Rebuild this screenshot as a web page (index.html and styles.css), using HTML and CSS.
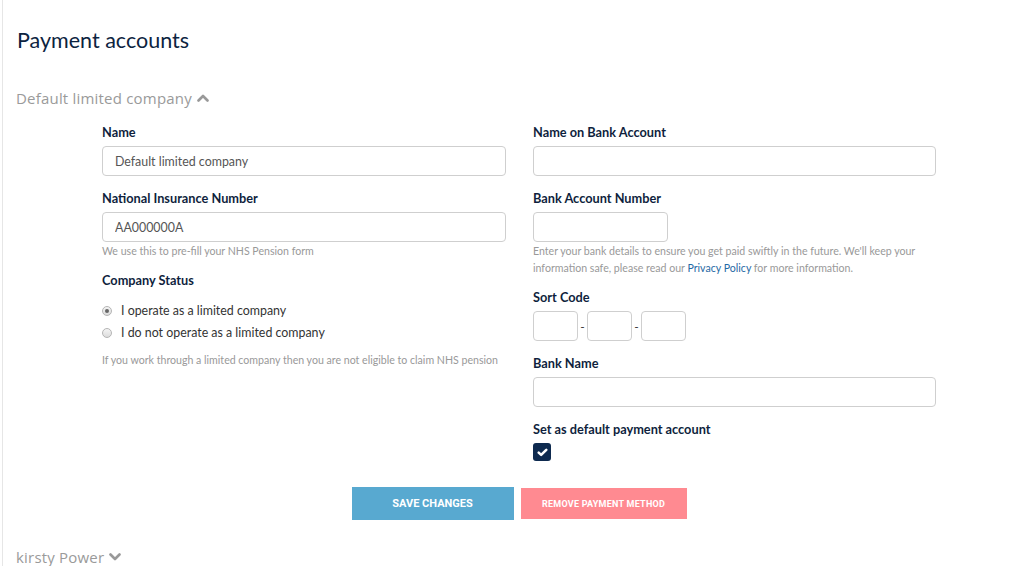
FILE: index.html
```html
<!DOCTYPE html>
<html lang="en">
<head>
<meta charset="utf-8">
<title>Payment accounts</title>
<link rel="stylesheet" href="styles.css">
</head>
<body>
<div class="page">
  <h1 class="title">Payment accounts</h1>

  <section class="account">
    <h2 class="acc-head">Default limited company
      <svg class="chev" viewBox="0 0 12 8" width="12" height="8"><path d="M1.5 6.5 L6 2 L10.5 6.5" fill="none" stroke="#999" stroke-width="2.6" stroke-linecap="round" stroke-linejoin="round"/></svg>
    </h2>

    <div class="form">
      <div class="col">
        <div class="group">
          <label class="lbl">Name</label>
          <input class="field" type="text" value="Default limited company">
        </div>
        <div class="group">
          <label class="lbl">National Insurance Number</label>
          <input class="field" type="text" value="AA000000A">
          <p class="help">We use this to pre-fill your NHS Pension form</p>
        </div>
        <div class="group">
          <label class="lbl">Company Status</label>
          <div class="radios">
            <label class="radio"><span class="dot checked"></span>I operate as a limited company</label>
            <label class="radio"><span class="dot"></span>I do not operate as a limited company</label>
          </div>
          <p class="help help-radio">If you work through a limited company then you are not eligible to claim NHS pension</p>
        </div>
      </div>

      <div class="col">
        <div class="group">
          <label class="lbl">Name on Bank Account</label>
          <input class="field" type="text">
        </div>
        <div class="group">
          <label class="lbl">Bank Account Number</label>
          <input class="field field-acc" type="text">
          <p class="help help-bank">Enter your bank details to ensure you get paid swiftly in the future. We'll keep your information safe, please read our <a class="link" href="#">Privacy Policy</a> for more information.</p>
        </div>
        <div class="group">
          <label class="lbl">Sort Code</label>
          <div class="sort">
            <input class="field field-sort" type="text"><span class="dash">-</span><input class="field field-sort" type="text"><span class="dash">-</span><input class="field field-sort" type="text">
          </div>
        </div>
        <div class="group">
          <label class="lbl">Bank Name</label>
          <input class="field" type="text">
        </div>
        <div class="group">
          <label class="lbl">Set as default payment account</label>
          <span class="check">
            <svg viewBox="0 0 12 10" width="11" height="9"><path d="M1.8 5.2 L4.5 7.7 L10.2 2" fill="none" stroke="#fff" stroke-width="2.8" stroke-linecap="round" stroke-linejoin="round"/></svg>
          </span>
        </div>
      </div>
    </div>

    <div class="actions">
      <button class="btn btn-save">SAVE CHANGES</button>
      <button class="btn btn-remove">REMOVE PAYMENT METHOD</button>
    </div>
  </section>

  <section class="account">
    <h2 class="acc-head acc-head-2">kirsty Power
      <svg class="chev" viewBox="0 0 12 8" width="12" height="8"><path d="M1.5 1.5 L6 6 L10.5 1.5" fill="none" stroke="#999" stroke-width="2.6" stroke-linecap="round" stroke-linejoin="round"/></svg>
    </h2>
  </section>
</div>
</body>
</html>
```

FILE: styles.css
```css
* { box-sizing: border-box; }
html, body { margin: 0; padding: 0; background: #fff; }
body { font-family: "Lato", "Liberation Sans", sans-serif; overflow: hidden; height: 566px; }

.page {
  margin-left: 2px;
  border-left: 1px solid #e6e6e6;
  min-height: 566px;
  padding-left: 14px;
}

.title {
  margin: 0;
  padding-top: 26px;
  font-family: "Lato", sans-serif;
  font-weight: 400;
  font-size: 21.5px;
  line-height: 28px;
  color: #0c2340;
}

.acc-head {
  margin: 0;
  padding-top: 34px;
  margin-left: -1px;
  font-family: "Open Sans", sans-serif;
  font-weight: 400;
  font-size: 15px;
  letter-spacing: 0.2px;
  line-height: 20px;
  color: #9a9a9a;
  display: flex;
  align-items: center;
  gap: 5px;
}
.acc-head-2 { padding-top: 27px; }
.chev { display: block; }

.form {
  margin-left: 85px;
  width: 834px;
  display: grid;
  grid-template-columns: 404px 403px;
  column-gap: 27px;
  padding-top: 16px;
}

.col { display: flex; flex-direction: column; }

.group { display: flex; flex-direction: column; align-items: flex-start; margin-bottom: 14px; }

.lbl {
  font-weight: 700;
  font-size: 12.75px;
  line-height: 16px;
  color: #0f1f3d;
  margin-bottom: 6px;
}

.field {
  width: 100%;
  height: 30px;
  border: 1px solid #cfcfcf;
  border-radius: 4px;
  padding: 0 12px;
  font-family: "Lato", sans-serif;
  font-size: 12.4px;
  color: #555;
  background: #fff;
  outline: none;
}
.field-acc { width: 135px; }
.field-sort { width: 45px; }

.help {
  margin: 1px 0 0;
  font-size: 10.6px;
  line-height: 17px;
  color: #999;
}
.group:has(.help) { margin-bottom: 12px; }
.help-radio { margin-top: 8px; }

.link { color: #1f6aa5; text-decoration: none; }

.radios { display: flex; flex-direction: column; margin-top: 6px; }
.radio {
  display: flex;
  align-items: center;
  font-size: 12.4px;
  line-height: 22px;
  color: #333;
}
.dot {
  width: 10px;
  height: 10px;
  border-radius: 50%;
  border: 1px solid #b5b5b5;
  background: linear-gradient(#f4f4f4, #dcdcdc);
  margin-left: 0;
  margin-right: 9px;
  position: relative;
}
.dot.checked::after {
  content: "";
  position: absolute;
  left: 2px; top: 2px;
  width: 4px; height: 4px;
  border-radius: 50%;
  background: #666;
}

.sort { display: flex; align-items: center; }
.dash { width: 9px; text-align: center; font-size: 12px; color: #333; }

.check {
  width: 18px;
  height: 18px;
  border-radius: 3px;
  background: #0e2a4f;
  display: flex;
  align-items: center;
  justify-content: center;
}

.actions {
  display: flex;
  justify-content: center;
  align-items: center;
  gap: 7px;
  margin-top: 12px;
  margin-left: 85px;
  width: 834px;
}
.btn {
  border: 0;
  color: #fff;
  font-family: "Roboto", sans-serif;
  font-weight: 700;
  cursor: pointer;
  padding: 0;
}
.btn-save { width: 162px; height: 33px; background: #58a9d0; font-size: 11px; }
.btn-remove { width: 166px; height: 31px; background: #ff8a91; font-size: 9px; letter-spacing: 0.25px; }
```
